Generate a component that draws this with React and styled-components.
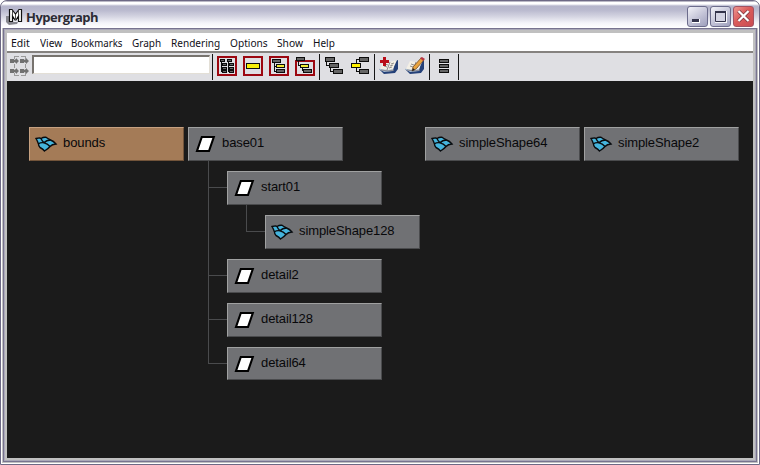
import React from 'react';
import styled, { createGlobalStyle } from 'styled-components';

const GlobalStyle = createGlobalStyle`
  * { box-sizing: border-box; }
  body { margin: 0; background: #fff; overflow: hidden; }
`;

const Window = styled.main`
  width: 760px;
  height: 465px;
  display: flex;
  flex-direction: column;
  background: #c0c0c0;
  border: 1px solid #6d6985;
  border-radius: 7px 7px 0 0;
  box-shadow: inset 0 0 0 1px #fff;
  overflow: hidden;
`;

const TitleBar = styled.header`
  height: 27px;
  flex: none;
  display: flex;
  align-items: center;
  padding: 4px 5px 0 5px;
  border-radius: 6px 6px 0 0;
  background: linear-gradient(#77738d 0, #fff 1px, #fff 3px, #b5b5cb 5px, #b9b9ce 9px, #d2d2e0 15px, #f4f4f9 22px, #fff 27px);
`;

const Title = styled.h1`
  flex: 1;
  margin: 0 0 0 2px;
  font: 700 13px/20px 'Open Sans', sans-serif;
  letter-spacing: -0.5px;
  color: #2c2c34;
`;

const Controls = styled.div`
  display: flex;
  gap: 2px;
`;

const ControlButton = styled.button`
  width: 21px;
  height: 21px;
  padding: 0;
  display: flex;
  border: 1px solid ${(p) => (p.$close ? '#a25262' : '#6c6c8c')};
  border-radius: 3px;
  background: ${(p) =>
    p.$close
      ? 'linear-gradient(135deg, #ee9690, #da5b5b 45%, #c94b51)'
      : 'linear-gradient(145deg, #f2f2f8, #c2c2d6 55%, #9fa0bd)'};
`;

const Body = styled.div`
  flex: 1;
  display: flex;
  flex-direction: column;
  margin: 0 2px 2px;
  border: 1px solid #77738f;
  padding: 4px 3px 3px;
  box-shadow: inset 0 0 0 1px #aaa8b8;
`;

const MenuBar = styled.nav`
  height: 20px;
  flex: none;
  display: flex;
  background: #fff;
  border-bottom: 2px solid #85827f;
  padding-left: 4px;
`;

const MenuItem = styled.span`
  width: ${(p) => p.$width}px;
  font: 11px/20px 'Noto Sans', sans-serif;
  transform: scaleX(${(p) => p.$stretch});
  transform-origin: left;
  white-space: nowrap;
  color: #101018;
`;

const ToolBar = styled.div`
  height: 28px;
  flex: none;
  display: flex;
  background: #dfdfe3;
`;

const ToolGroup = styled.div`
  display: flex;
  width: ${(p) => p.$width}px;
  border-right: 1px solid #151515;
  margin: 1px 0;
`;

const SearchField = styled.input`
  width: 178px;
  height: 19px;
  margin: 1px 0 0;
  padding: 0 3px;
  border: solid;
  border-width: 2px 1px 1px 2px;
  border-color: #77736e #e3dfd6 #e3dfd6 #77736e;
  background: #fff;
  outline: 0;
`;

const Art = styled.svg`
  display: block;
  flex: none;
`;

const Canvas = styled.section`
  position: relative;
  flex: 1;
  background: #1b1b1b;
`;

const Wires = styled.svg`
  position: absolute;
  inset: 0;
`;

const Node = styled.div`
  position: absolute;
  left: ${(p) => p.$x}px;
  top: ${(p) => p.$y}px;
  width: 155px;
  height: ${(p) => p.$height}px;
  display: flex;
  padding: 6px 0 0 5px;
  border: 1px solid;
  border-color: ${(p) => (p.$active ? '#c6a181 #72543a #72543a #c6a181' : '#a0a1a1 #4a4b4d #4a4b4d #a0a1a1')};
  background: ${(p) => (p.$active ? '#a47b57' : '#707174')};
`;

const NodeLabel = styled.span`
  margin-left: 4px;
  font: 13px/18px 'Liberation Sans', Arial, sans-serif;
  letter-spacing: -0.1px;
  color: #08080a;
`;

const AppIcon = () => (
  <Art width="18" height="19" viewBox="0 0 18 19">
    <path d="M0 9h3v6h9l-1 2-8 1-3-3z" fill="#85858d" />
    <path d="M3.500 14.500V2.500H6L9.500 7 13 2.500h2.500v12h-3V9L10 13H9L6.500 9v5.500z" fill="#fff" stroke="#111" strokeWidth="1.200" />
    <path d="M6.500 4v5M9.500 7v5M12.500 4v5" fill="none" stroke="#222" strokeWidth=".8" />
  </Art>
);

const MinimizeIcon = () => (
  <Art width="19" height="19"><path d="M4 12h8v4H4z" fill="#fff" /><path d="M4 12h7v3H4z" fill="#35354d" /></Art>
);
const MaximizeIcon = () => (
  <Art width="19" height="19">
    <path d="M4 4h12v12H4z" fill="#f7f7fb" />
    <path d="M4.500 5v9.500h10V5z" fill="#d3d3e2" stroke="#33334a" />
    <path d="M4 4h11v2H4z" fill="#33334a" />
  </Art>
);
const CloseIcon = () => (
  <Art width="19" height="19">
    <path d="m4.500 4 10 10m0-10-10 10" stroke="#70323b" strokeWidth="3.600" />
    <path d="m4.500 4 10 10m0-10-10 10" stroke="#fff" strokeWidth="2.300" />
  </Art>
);

const Box = ({ x, y, w = 9, h = 4, c = '#656565' }) => (
  <rect x={x + 0.5} y={y + 0.5} width={w - 1} height={h - 1} fill={c} stroke="#0c0c0c" />
);
const Line = ({ d, c = '#0c0c0c' }) => <path d={d} fill="none" stroke={c} shapeRendering="crispEdges" />;
const RedFrame = () => <rect x="5" y="3" width="18" height="18" fill="none" stroke="#9c0710" strokeWidth="2" />;

const arrow = (x, y) => `M${x} ${y + 1}h4v1l2-1v-1l3 3-3 3v-1l-2-1v1h-4z`;
const NetworkIcon = () => (
  <Art width="25" height="26">
    <path d={[[3, 4], [13, 4], [3, 14], [13, 14]].map(([x, y]) => arrow(x, y)).join('')} fill="#707070" />
    <Line d="M7.500 5V2.500h4m2 0h5V5M7.500 10v4m11-4v4M7.500 19v2.500h4m2 0h5V19" c="#9a9a9a" />
  </Art>
);
const HierarchyIcon = () => (
  <Art width="26" height="26">
    <RedFrame />
    <Line d="M8.500 8v9.500h2M8.500 10.500h2m-2 4h2M15.500 8v9.500h2m-2-7h2m-2 4h2" />
    <Box x={7} y={5} w={5} h={3} /><Box x={14} y={5} w={5} h={3} />
    {[9, 13, 16].map((y) => <React.Fragment key={y}><Box x={9} y={y} w={5} h={3} /><Box x={16} y={y} w={5} h={3} /></React.Fragment>)}
  </Art>
);
const SingleIcon = () => <Art width="26" height="26"><RedFrame /><Box x={7} y={9} w={14} h={6} c="#f7ef08" /></Art>;
const BranchIcon = () => (
  <Art width="26" height="26">
    <RedFrame /><Line d="M9.500 9v8.500h3m-3-5h3" />
    <Box x={7} y={5} /><Box x={11} y={10} c="#f2eb35" /><Box x={11} y={15} />
  </Art>
);
const FolderBranchIcon = () => (
  <Art width="26" height="26">
    <path d="M5 7h18v14H5z" fill="none" stroke="#9c0710" strokeWidth="2" />
    <Line d="M7.500 6v5.500h3m1 2v3h3" />
    <Box x={5} y={3} /><Box x={9} y={10} c="#f2eb35" /><Box x={12} y={15} />
  </Art>
);
const CascadeIcon = () => (
  <Art width="26" height="26">
    <Line d="M6.500 7v4.500h3m1 2v4h4" />
    <Box x={5} y={3} w={10} h={5} /><Box x={9} y={9} w={10} h={5} /><Box x={13} y={15} w={10} h={5} />
  </Art>
);
const FanIcon = () => (
  <Art width="26" height="26">
    <Line d="M14 5.500h-4v4m0 4v4h4" />
    <Box x={5} y={9} w={10} h={5} c="#fff200" /><Box x={13} y={3} w={10} h={5} /><Box x={13} y={15} w={10} h={5} />
  </Art>
);
const Book = () => (
  <g>
    <path d="m4 15 5 5 11-1 3-4V6l-3 1-2 9-9 1z" fill="#244078" />
    <path d="m4 15 5-2 8 1 1 3-9 1z" fill="#a7bed3" />
    <path d="m5 15 4-8 6 1 7-2-4 9-5 1z" fill="#f3efe5" />
    <path d="m6 16 7 1 6-1M15 8l-3 8" stroke="#8c8a92" fill="none" />
    <path d="m10 10 3 1m-4 1 3 1m4-3 3-1m-4 3 3-1m-4 3 3-1" stroke="#777" strokeWidth=".8" />
  </g>
);
const AddBookmarkIcon = () => <Art width="26" height="26"><Book /><path d="M8 3h3v3h3v3h-3v3H8V9H5V6h3z" fill="#b90d18" /></Art>;
const EditBookmarkIcon = () => (
  <Art width="27" height="26">
    <Book />
    <path d="m12 13 8-9 3 2-8 9-4 2z" fill="#e9a33e" stroke="#65401b" strokeWidth=".7" />
    <path d="m19 4 2-1 3 2-2 2z" fill="#b73542" /><path d="m11 17 1-3 2 2z" fill="#222" />
  </Art>
);
const ListIcon = () => (
  <Art width="28" height="26">{[5, 10, 15].map((y) => <Box key={y} x={9} y={y} w={10} />)}</Art>
);

const MeshIcon = () => (
  <Art width="24" height="21">
    <path d="m1 4.500 3.500-.6 1.500.6Q8.500 2.800 11 3.300q1.500 1.200 4.500 2.700 3 1 5.500 4-4 .3-6 2.500-2 2.500-5.500 4.500-1.500-2-4.500-3.500Q3.500 12 3.500 10 2.500 7 1 4.500z" fill="#45b4dc" stroke="#080b0e" strokeWidth="1.400" />
    <path d="M6 4.500Q7 7 9 8.800q3.500.7 6 3.700M3.500 9.800Q6 8 9 8.800 11.500 6 15.500 6" fill="none" stroke="#080b0e" strokeWidth="1.300" />
  </Art>
);
const TransformIcon = () => (
  <Art width="24" height="21"><path d="M7.800 3h12l-4.800 14h-12z" fill="#fff" stroke="#000" strokeWidth="2.100" /></Art>
);

const menus = [['Edit', 29, 0.95], ['View', 31, 0.92], ['Bookmarks', 61, 0.88], ['Graph', 39, 0.91], ['Rendering', 59, 0.915], ['Options', 47, 0.92], ['Show', 36, 0.93], ['Help', 40, 0.91]];
const nodes = [
  ['bounds', 22, 46, 'mesh', true], ['base01', 181, 46], ['simpleShape64', 418, 46, 'mesh'], ['simpleShape2', 577, 46, 'mesh'],
  ['start01', 220, 90], ['simpleShape128', 258, 134, 'mesh'], ['detail2', 220, 178], ['detail128', 220, 222], ['detail64', 220, 266, 'transform', false, 33],
];

export default function App() {
  return (
    <>
      <GlobalStyle />
      <Window>
        <TitleBar>
          <AppIcon />
          <Title>Hypergraph</Title>
          <Controls>
            <ControlButton aria-label="Minimize"><MinimizeIcon /></ControlButton>
            <ControlButton aria-label="Maximize"><MaximizeIcon /></ControlButton>
            <ControlButton $close aria-label="Close"><CloseIcon /></ControlButton>
          </Controls>
        </TitleBar>
        <Body>
          <MenuBar>{menus.map(([label, width, stretch]) => <MenuItem key={label} $width={width} $stretch={stretch}>{label}</MenuItem>)}</MenuBar>
          <ToolBar>
            <ToolGroup $width={206}><NetworkIcon /><SearchField aria-label="Filter" /></ToolGroup>
            <ToolGroup $width={107}><HierarchyIcon /><SingleIcon /><BranchIcon /><FolderBranchIcon /></ToolGroup>
            <ToolGroup $width={55}><CascadeIcon /><FanIcon /></ToolGroup>
            <ToolGroup $width={55}><AddBookmarkIcon /><EditBookmarkIcon /></ToolGroup>
            <ToolGroup $width={29}><ListIcon /></ToolGroup>
          </ToolBar>
          <Canvas>
            <Wires width="746" height="377">
              <Line c="#4a4b4d" d="M201.500 80v202.500h20M201.500 106.500h20M201.500 194.500h20M201.500 238.500h20M239.500 124v26.500h20" />
            </Wires>
            {nodes.map(([label, x, y, kind, active, height = 34]) => (
              <Node key={label} $x={x} $y={y} $active={active} $height={height}>
                {kind === 'mesh' ? <MeshIcon /> : <TransformIcon />}
                <NodeLabel>{label}</NodeLabel>
              </Node>
            ))}
          </Canvas>
        </Body>
      </Window>
    </>
  );
}
